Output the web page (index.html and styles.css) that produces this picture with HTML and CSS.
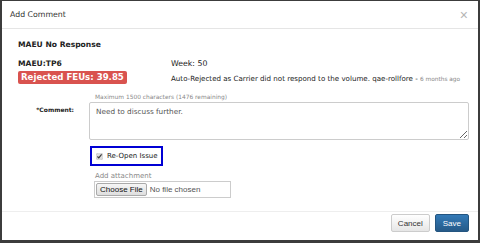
FILE: index.html
```html
<!DOCTYPE html>
<html lang="en">
<head>
    <meta charset="UTF-8">
    <title>Add Comment</title>
    <link rel="stylesheet" href="styles.css">
</head>
<body>
    <div class="modal">
        <div class="modal-header">
            <span class="title">Add Comment</span>
            <span class="close">&times;</span>
        </div>

        <div class="modal-body">
            <h4>MAEU No Response</h4>
            <div class="info">
                <div class="info-left">
                    <b>MAEU:TP6</b>
                    <span class="badge">Rejected FEUs: 39.85</span>
                </div>
                <div class="info-right">
                    <span class="week">Week: 50</span>
                    <span class="note">Auto-Rejected as Carrier did not respond to the volume. qae-rollfore - <small>6 months ago</small></span>
                </div>
            </div>

            <div class="comment-row">
                <label class="comment-label">*Comment:</label>
                <div class="comment-field">
                    <div class="hint">Maximum 1500 characters (1476 remaining)</div>
                    <textarea rows="3">Need to discuss further.</textarea>
                </div>
            </div>

            <div class="extras">
                <label class="reopen"><input type="checkbox" checked> Re-Open Issue</label>
                <div class="attach">
                    <div class="attach-label">Add attachment</div>
                    <div class="file-box">
                        <button class="choose">Choose File</button>
                        <span>No file chosen</span>
                    </div>
                </div>
            </div>
        </div>

        <div class="modal-footer">
            <button class="btn">Cancel</button>
            <button class="btn primary">Save</button>
        </div>
    </div>
</body>
</html>
```

FILE: styles.css
```css
html, body {
    margin: 0;
    height: 100%;
}

body {
    background-color: #3c3c3c;
    padding: 1px 2px 3px 2px;
    box-sizing: border-box;
    font-family: "DejaVu Sans", Verdana, sans-serif;
    color: #222;
}

.modal {
    background-color: #fff;
    height: 100%;
    display: flex;
    flex-direction: column;
}

.modal-header {
    display: flex;
    justify-content: space-between;
    align-items: center;
    height: 27px;
    padding: 0 10px 0 8px;
    border-bottom: 1px solid #e5e5e5;
    font-size: 7.8px;
    color: #333;
}

.close {
    font-size: 14px;
    color: #b5b5b5;
    font-family: "Liberation Sans", Arial, sans-serif;
}

.modal-body {
    flex: 1;
    padding: 11px 9px 0 16px;
}

h4 {
    margin: 0 0 9px 0;
    font-size: 7.6px;
    line-height: 10px;
}

.info {
    display: flex;
}

.info-left {
    width: 153px;
    display: flex;
    flex-direction: column;
    align-items: flex-start;
    gap: 2px;
}

.info-left b {
    font-size: 7.6px;
    line-height: 10px;
}

.badge {
    background-color: #d9534f;
    color: #fff;
    font-weight: bold;
    font-size: 8.6px;
    line-height: 11px;
    padding: 1px 3px;
    border-radius: 2px;
}

.info-right {
    display: flex;
    flex-direction: column;
    gap: 5px;
}

.week {
    font-size: 7.8px;
    line-height: 10px;
}

.note {
    font-size: 7.1px;
    line-height: 10px;
    white-space: nowrap;
}

.note small {
    font-size: 5.8px;
    color: #888;
}

.comment-row {
    display: flex;
    margin-top: 9px;
}

.comment-label {
    width: 56px;
    text-align: right;
    font-size: 6px;
    line-height: 8px;
    font-weight: bold;
    padding-top: 13px;
}

.comment-field {
    flex: 1;
    margin-left: 15px;
}

.hint {
    font-size: 5.9px;
    line-height: 8px;
    color: #888;
    padding-left: 6px;
    margin-bottom: 1px;
}

textarea {
    display: block;
    width: 100%;
    height: 38px;
    box-sizing: border-box;
    border: 1px solid #ccc;
    border-radius: 2px;
    padding: 4px 6px;
    font-family: "DejaVu Sans", Verdana, sans-serif;
    font-size: 7.3px;
    color: #555;
}

.extras {
    padding-left: 72px;
    margin-top: 6px;
}

.reopen {
    display: flex;
    align-items: center;
    gap: 4px;
    width: fit-content;
    height: 20px;
    box-sizing: border-box;
    border: 2px solid #0000d4;
    padding: 0 3px 0 4px;
    font-size: 7px;
}

.reopen input {
    margin: 0;
    width: 7px;
    height: 7px;
    accent-color: #dcdcdc;
}

.attach {
    padding-left: 4px;
    margin-top: 6px;
}

.attach-label {
    font-size: 7px;
    line-height: 8px;
    color: #888;
    padding-left: 1px;
    margin-bottom: 1px;
}

.file-box {
    display: flex;
    align-items: center;
    gap: 3px;
    width: 137px;
    height: 17px;
    box-sizing: border-box;
    border: 1px solid #ccc;
    padding: 0 1px;
    font-size: 8px;
    color: #555;
    font-family: "Liberation Sans", Arial, sans-serif;
}

.choose {
    font-family: "Liberation Sans", Arial, sans-serif;
    font-size: 8px;
    color: #111;
    height: 13px;
    background: linear-gradient(#f6f6f6, #dedede);
    border: 1px solid #aaa;
    border-radius: 2px;
    padding: 0 3px;
}

.modal-footer {
    display: flex;
    justify-content: flex-end;
    gap: 5px;
    padding: 2px 9px 8px 0;
    border-top: 1px solid #eee;
}

.btn {
    font-family: "Liberation Sans", Arial, sans-serif;
    font-size: 8px;
    height: 18px;
    padding: 0 6px;
    border: 1px solid #ccc;
    border-radius: 2px;
    background: linear-gradient(#fff, #e6e6e6);
    color: #333;
}

.btn.primary {
    background: linear-gradient(#337ab7, #265a88);
    border-color: #245580;
    color: #fff;
    padding: 0 7px;
}
```
